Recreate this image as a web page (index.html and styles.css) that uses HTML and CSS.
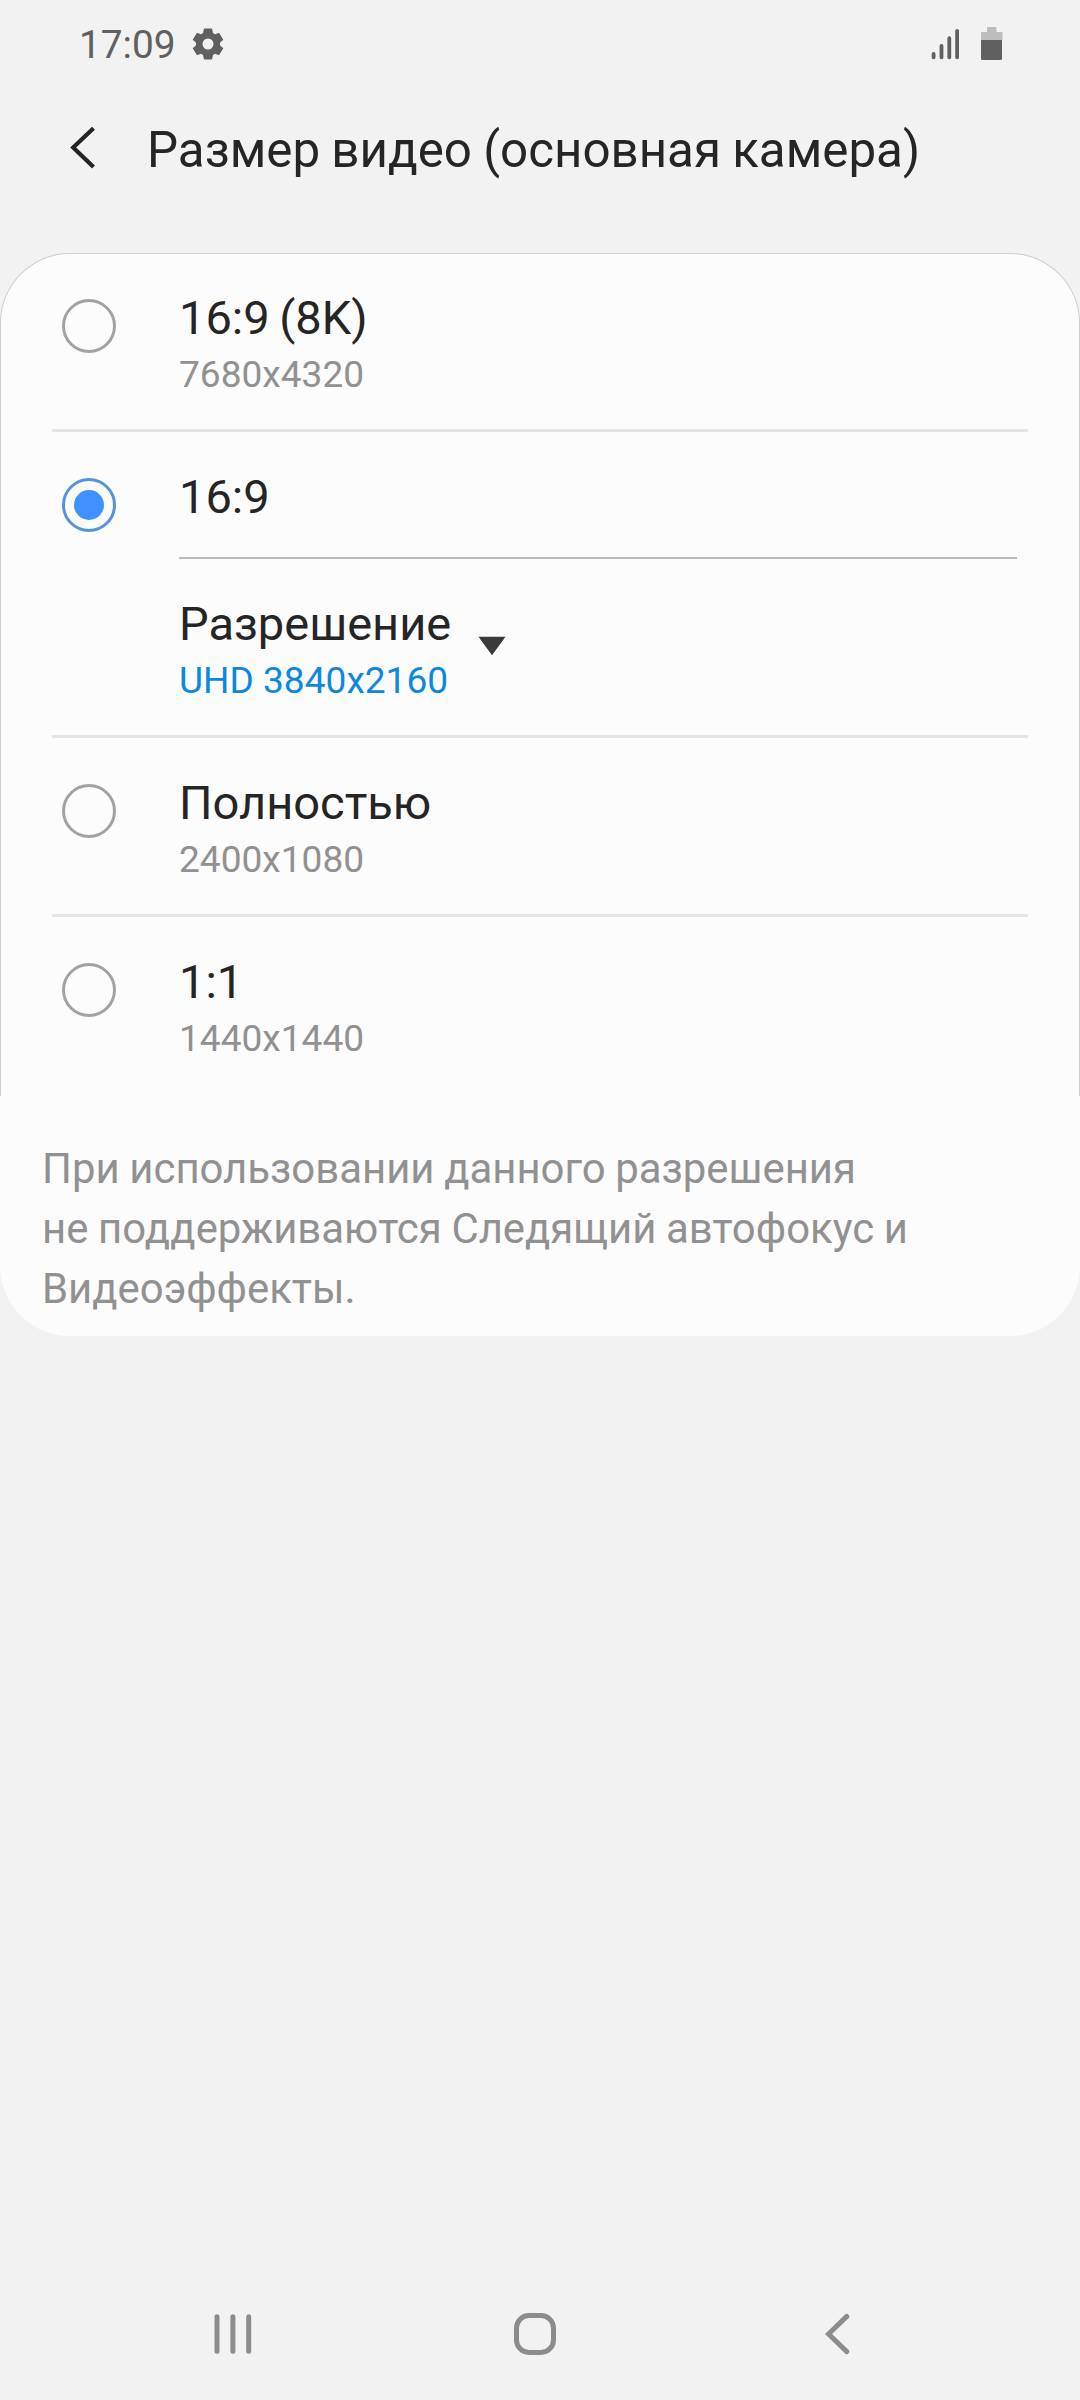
FILE: index.html
```html
<!DOCTYPE html>
<html lang="ru">
<head>
<meta charset="utf-8">
<title>Размер видео</title>
<link rel="stylesheet" href="styles.css">
</head>
<body>
<div class="screen">
  <div class="status">
    <span class="time">17:09</span>
    <svg class="gear" width="32" height="32" viewBox="-16 -16 32 32"><path fill-rule="evenodd" d="M-4-15.5H4L5-11 7-9.8 11-11.3 15.3-4.3 12-1.2V1.2L15.3 4.3 11 11.3 7 9.8 5 11 4 15.5H-4L-5 11-7 9.8-11 11.3-15.3 4.3-12 1.2V-1.2L-15.3-4.3-11-11.3-7-9.8-5-11ZM5.5 0A5.5 5.5 0 1 0-5.5 0A5.5 5.5 0 1 0 5.5 0Z"/></svg>
    <svg class="signal" width="28" height="32" viewBox="931 28 28 32"><path d="M933.6 54v3.3M941.5 45.8v11.5M949.3 38.2v19.1M957.1 31v26.3"/></svg>
    <svg class="battery" width="22" height="34" viewBox="981 27 22 34"><path class="light" d="M981 40V33q0-1 1-1h5V28q0-1 1-1h7.500q1 0 1 1v4h5q1 0 1 1v7z"/><path d="M981 40h21v18.500q0 1.500-1.500 1.500h-18q-1.500 0-1.500-1.500z"/></svg>
  </div>
  <header class="header">
    <svg class="up" width="28" height="44" viewBox="70 126 28 44"><path d="M93.500 128.200L73.200 147.600 93.500 167"/></svg>
    <h1>Размер видео (основная камера)</h1>
  </header>
  <main>
    <div class="list">
      <div class="row">
        <span class="radio"></span>
        <div class="body"><div class="label">16:9 (8K)</div><div class="sub">7680x4320</div></div>
      </div>
      <div class="row">
        <span class="radio checked"></span>
        <div class="body">
          <div class="label only">16:9</div>
          <div class="dropdown">
            <div><div class="label">Разрешение</div><div class="sub value">UHD 3840x2160</div></div>
            <svg width="28" height="20" viewBox="0 0 28 20"><path d="M.5.700h27L14 19.300z"/></svg>
          </div>
        </div>
      </div>
      <div class="row">
        <span class="radio"></span>
        <div class="body"><div class="label">Полностью</div><div class="sub">2400x1080</div></div>
      </div>
      <div class="row">
        <span class="radio"></span>
        <div class="body"><div class="label">1:1</div><div class="sub">1440x1440</div></div>
      </div>
    </div>
    <p class="note">При использовании данного разрешения<br>не поддерживаются Следящий автофокус и<br>Видеоэффекты.</p>
  </main>
  <nav class="nav">
    <svg width="38" height="42" viewBox="214 2313 38 42"><path d="M217 2316.700v34.600M232.900 2316.700v34.600M248.700 2316.700v34.600"/></svg>
    <svg class="home" width="42" height="42" viewBox="0 0 42 42"><rect x="2.500" y="2.500" width="37" height="37" rx="12.500"/></svg>
    <svg width="26" height="42" viewBox="825 2313 26 42"><path d="M846.800 2316.400L828.500 2334 846.800 2351.600"/></svg>
  </nav>
</div>
</body>
</html>
```
FILE: styles.css
```css
* { box-sizing: border-box; }
body { margin: 0; background: #f2f2f2; font-family: Roboto, sans-serif; color: #252525; }
svg { display: block; flex: none; }
.screen { width: 1080px; height: 2400px; display: flex; flex-direction: column; background: #f2f2f2; }

.status { height: 88px; padding: 0 77px 0 79px; display: flex; align-items: center; fill: #606060; color: #606060; }
.time { width: 113px; font-size: 38.8px; line-height: 44px; padding-top: 2px; }
.gear { fill: #606060; }
.signal { margin-left: auto; margin-right: 22px; fill: none; stroke: #606060; stroke-width: 3.8; stroke-linecap: round; }
.battery .light { fill: #bdbdbd; }

.header { height: 165px; padding: 38px 0 0 70px; display: flex; align-items: flex-start; }
.up { fill: none; stroke: #252525; stroke-width: 4.2; }
h1 { margin: -5px 0 0 49px; font-size: 49.3px; font-weight: 400; line-height: 58px; word-spacing: -1px; white-space: nowrap; }

.list { background: #fcfcfc; border: 1px solid #cfcfcf; border-bottom: 0; border-radius: 70px 70px 0 0; padding: 0 51px; height: 843px; }
.row { height: 179px; display: flex; padding: 37px 11px 0 10px; border-bottom: 3px solid #e5e5e5; }
.row:first-child { height: 178px; padding-top: 36px; }
.row:nth-child(2) { height: 306px; }
.row:last-child { border-bottom: 0; }
.radio { flex: none; width: 54px; height: 54px; margin: 9px 63px 0 0; border: 3px solid #a2a2a2; border-radius: 50%; }
.checked { border-color: #5593db; display: grid; place-items: center; }
.checked::after { content: ""; width: 30px; height: 30px; border-radius: 50%; background: #3e91ff; }
.body { flex: 1; }
.label { font-size: 47px; line-height: 56px; word-spacing: -2px; white-space: nowrap; }
.sub { margin-top: 7px; font-size: 37.1px; line-height: 43px; color: #919191; white-space: nowrap; }
.value { color: #0d88de; }
.only { height: 90px; border-bottom: 2px solid #bcbcbc; }
.dropdown { display: flex; padding-top: 37px; gap: 27px; }
.dropdown svg { margin-top: 40px; fill: #3a3a3a; }

.note { margin: 0; height: 240px; padding: 43px 42px 0; background: #fcfcfc; border-radius: 0 0 70px 70px; font-size: 41.9px; line-height: 60px; word-spacing: -0.7px; color: #919191; white-space: nowrap; }

.nav { margin-top: auto; height: 132px; padding: 0 229px 0 214px; display: flex; justify-content: space-between; align-items: center; fill: none; stroke: #8c8c8c; stroke-width: 5; stroke-linecap: round; }
.home { margin-right: 8px; }
```
